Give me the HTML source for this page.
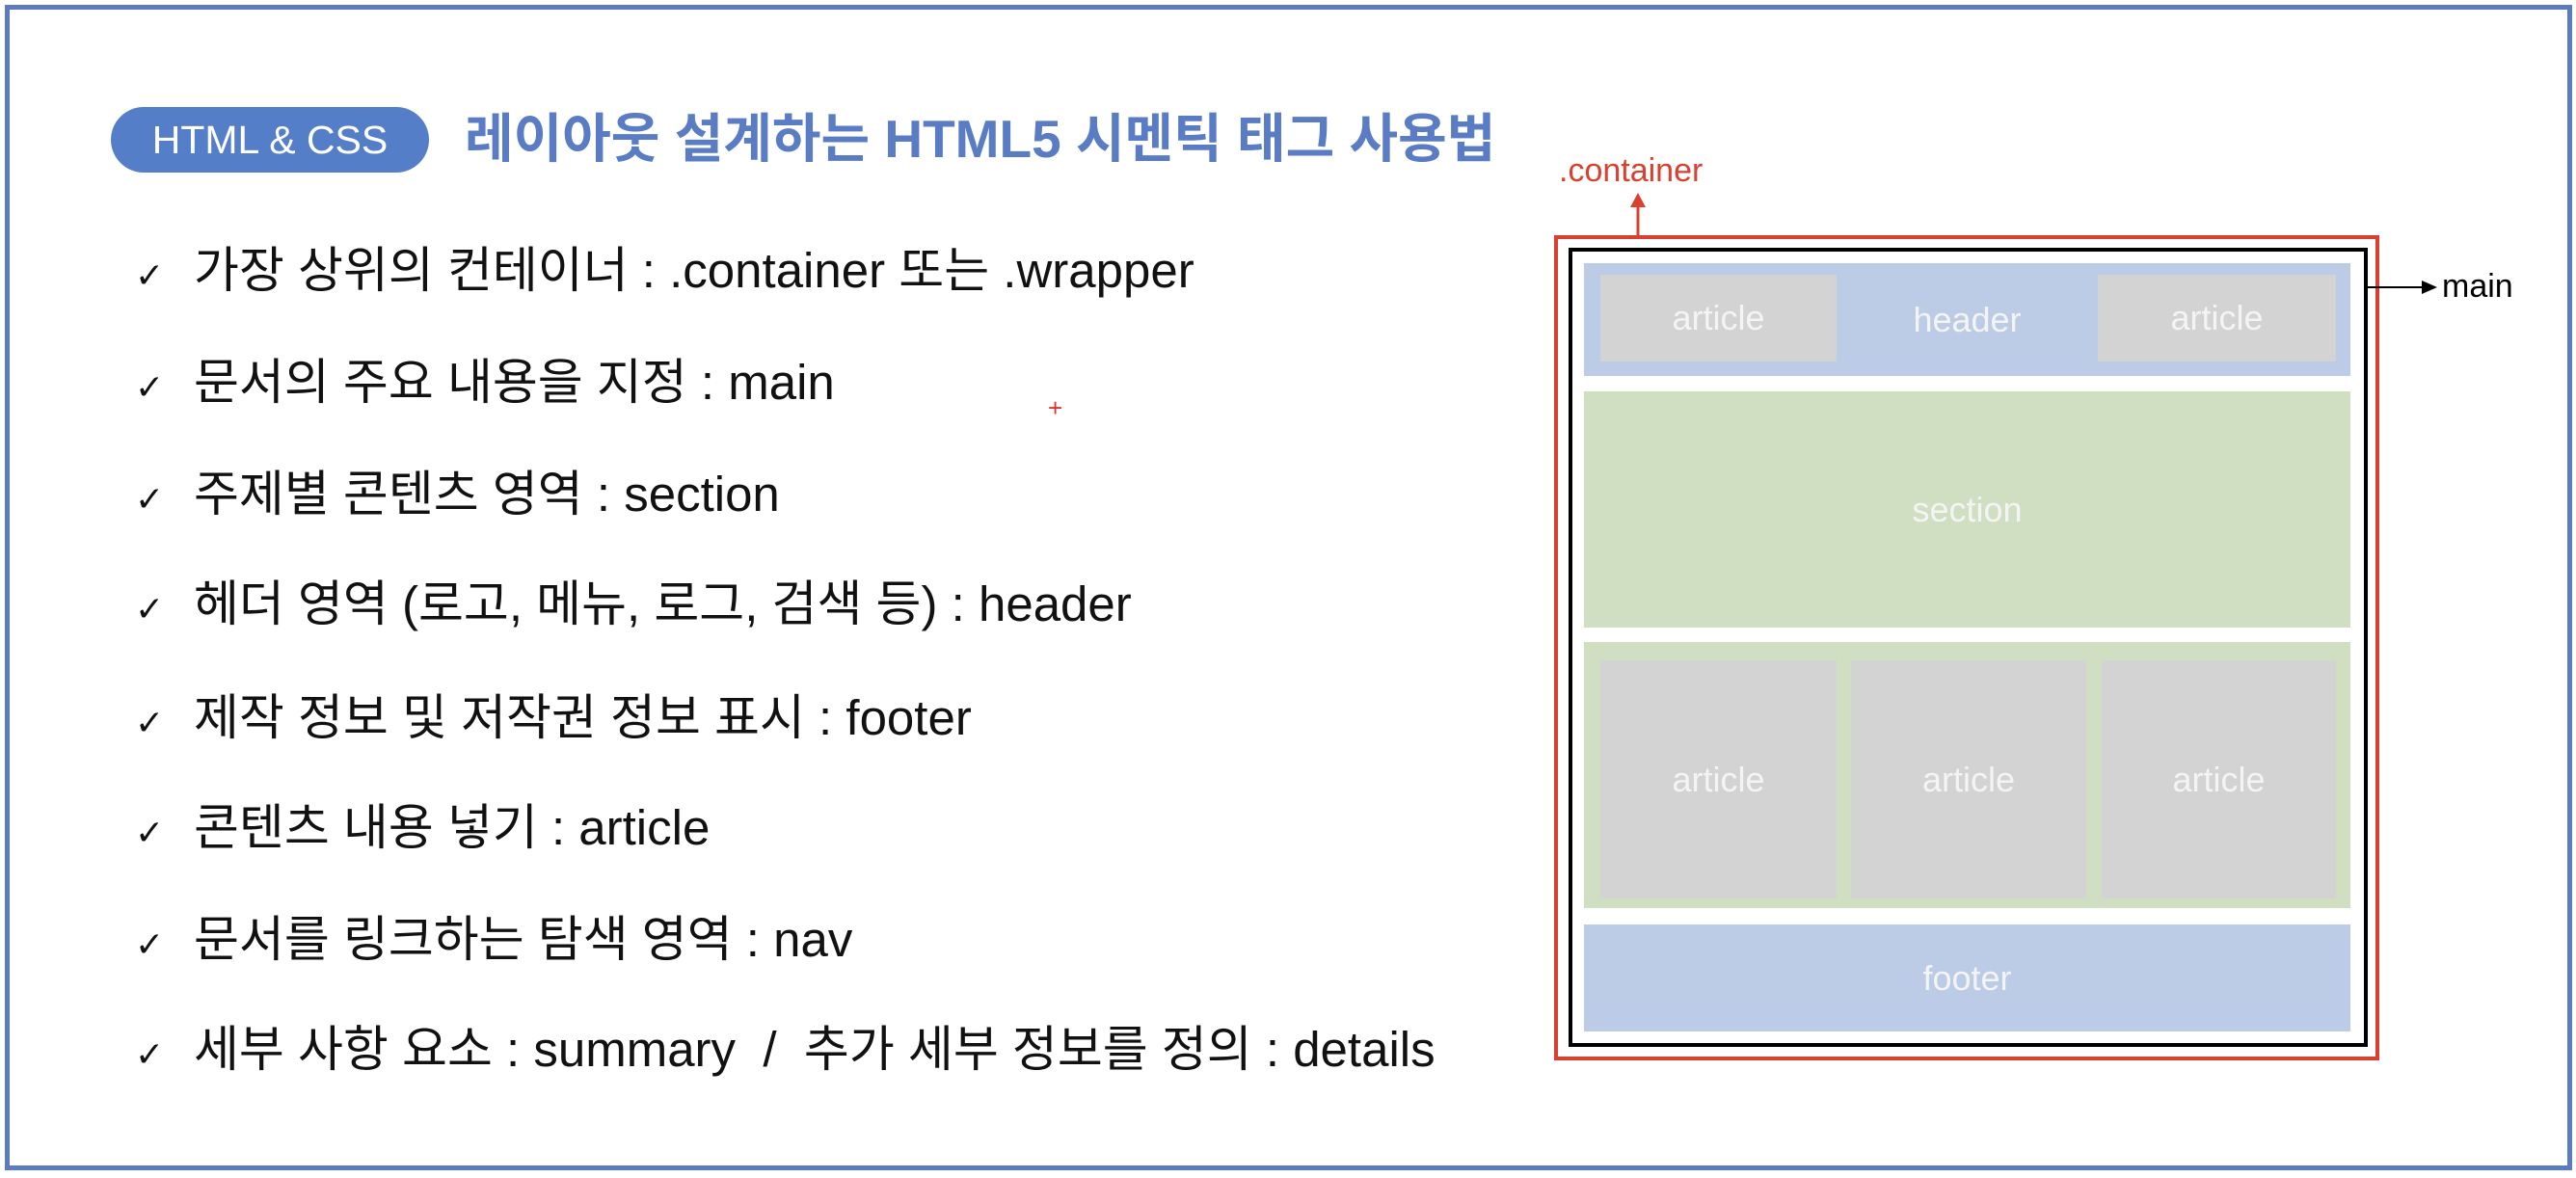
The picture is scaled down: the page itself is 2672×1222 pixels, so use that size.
<!DOCTYPE html>
<html><head><meta charset="utf-8">
<style>
*{margin:0;padding:0;box-sizing:border-box}
body{width:2672px;height:1222px;background:#fff;position:relative;overflow:hidden;font-family:"Liberation Sans","Noto Sans CJK KR",sans-serif}
.frame{position:absolute;left:5px;top:5px;width:2663px;height:1209px;border:5px solid #5a7bc0}
.pill{position:absolute;left:115px;top:111px;width:330px;height:68px;border-radius:34px;background:#557ec9;color:#fff;font-size:41px;line-height:68px;text-align:center}
.title{position:absolute;left:482px;top:109px;font-size:55px;line-height:70px;color:#5a7cc4;font-weight:bold;white-space:nowrap}
.item{position:absolute;left:140px;font-size:51px;line-height:60px;color:#111;white-space:nowrap}
.item span{display:inline-block;width:61px;font-family:"DejaVu Sans",sans-serif;font-size:36px}
.b{position:absolute;color:#f4f4f4;font-size:36px;display:flex;align-items:center;justify-content:center}
.blue{background:#bccbe6}.green{background:#d0dfc1}.gray{background:#d4d3d4}
</style></head><body>
<div class="frame"></div>
<div class="pill">HTML &amp; CSS</div>
<div class="title">레이아웃 설계하는 HTML5 시멘틱 태그 사용법</div>
<div class="item" style="top:251px"><span>✓</span>가장 상위의 컨테이너 : .container 또는 .wrapper</div>
<div class="item" style="top:367px"><span>✓</span>문서의 주요 내용을 지정 : main</div>
<div class="item" style="top:483px"><span>✓</span>주제별 콘텐츠 영역 : section</div>
<div class="item" style="top:597px"><span>✓</span>헤더 영역 (로고, 메뉴, 로그, 검색 등) : header</div>
<div class="item" style="top:715px"><span>✓</span>제작 정보 및 저작권 정보 표시 : footer</div>
<div class="item" style="top:829px"><span>✓</span>콘텐츠 내용 넣기 : article</div>
<div class="item" style="top:945px"><span>✓</span>문서를 링크하는 탐색 영역 : nav</div>
<div class="item" style="top:1059px"><span>✓</span>세부 사항 요소 : summary &nbsp;/&nbsp; 추가 세부 정보를 정의 : details</div>
<div style="position:absolute;left:1087px;top:408px;color:#d33;font-size:26px">+</div>

<div style="position:absolute;left:1617px;top:158px;color:#d9402f;font-size:34px">.container</div>
<svg style="position:absolute;left:0;top:0" width="2672" height="1222">
<line x1="1699" y1="244" x2="1699" y2="212" stroke="#d9402f" stroke-width="3"/>
<polygon points="1691,215 1707,215 1699,200" fill="#d9402f"/>
<rect x="1614" y="246" width="852" height="852" fill="none" stroke="#d9402f" stroke-width="4"/>
<rect x="1629" y="259" width="825" height="825" fill="none" stroke="#000" stroke-width="4"/>
<line x1="2456" y1="298" x2="2515" y2="298" stroke="#000" stroke-width="2"/>
<polygon points="2512,291 2528,298 2512,305" fill="#000"/>
</svg>
<div style="position:absolute;left:2533px;top:278px;color:#000;font-size:34px">main</div>

<div class="b blue" style="left:1643px;top:273px;width:795px;height:117px">header</div>
<div class="b gray" style="left:1660px;top:285px;width:245px;height:90px">article</div>
<div class="b gray" style="left:2176px;top:285px;width:247px;height:90px">article</div>
<div class="b green" style="left:1643px;top:406px;width:795px;height:245px">section</div>
<div class="b green" style="left:1643px;top:666px;width:795px;height:276px"></div>
<div class="b gray" style="left:1660px;top:685px;width:245px;height:247px">article</div>
<div class="b gray" style="left:1920px;top:685px;width:244px;height:247px">article</div>
<div class="b gray" style="left:2180px;top:685px;width:243px;height:247px">article</div>
<div class="b blue" style="left:1643px;top:959px;width:795px;height:111px">footer</div>
</body></html>
